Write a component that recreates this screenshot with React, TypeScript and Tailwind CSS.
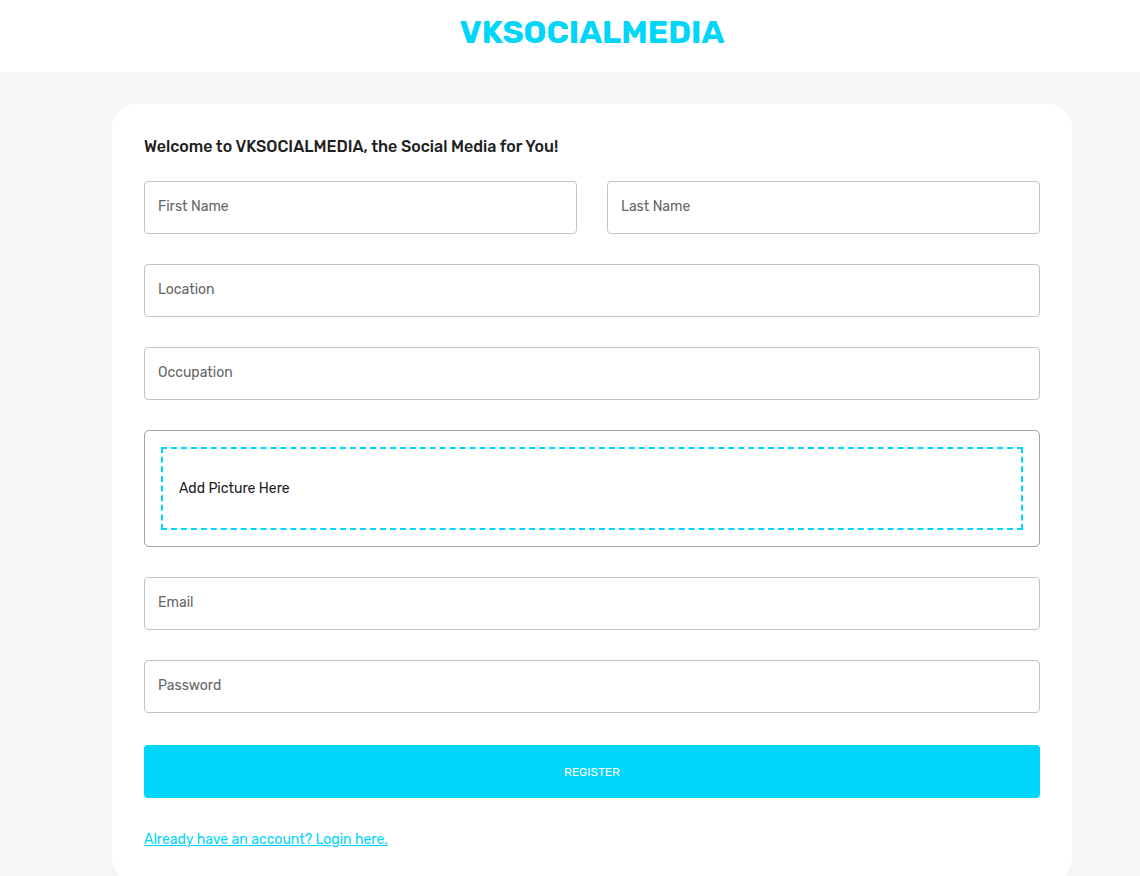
import { useId, useState, type FormEvent } from "react";

type FieldProps = {
  label: string;
  name: string;
  type?: string;
  autoComplete?: string;
  half?: boolean;
};

function Field({ label, name, type = "text", autoComplete, half = false }: FieldProps) {
  const id = useId();
  return (
    <div className={half ? "relative col-span-2 sm:col-span-1" : "relative col-span-2"}>
      <input
        id={id}
        name={name}
        type={type}
        autoComplete={autoComplete}
        placeholder=" "
        className="peer block h-[53px] w-full rounded border border-[#c4c4c4] bg-transparent px-[13px] text-sm text-[#212121] outline-none hover:border-[#212121] focus:border-[#00d5fa]"
      />
      <label
        htmlFor={id}
        className="pointer-events-none absolute -top-2 left-[10px] bg-white px-1 text-xs leading-4 text-[#666666] peer-placeholder-shown:top-4 peer-placeholder-shown:text-sm peer-placeholder-shown:leading-5 peer-focus:-top-2 peer-focus:text-xs peer-focus:leading-4 peer-focus:text-[#00d5fa]"
      >
        {label}
      </label>
    </div>
  );
}

function PicturePicker() {
  const id = useId();
  const [fileName, setFileName] = useState("");
  return (
    <div className="col-span-2 rounded-[5px] border border-[#a3a3a3] p-4">
      <label
        htmlFor={id}
        className="flex h-[83px] cursor-pointer items-center border-2 border-dashed border-[#00d5fa] px-4 text-sm text-[#212121] focus-within:bg-[#e6fbff]"
      >
        {fileName || "Add Picture Here"}
        <input
          id={id}
          name="picture"
          type="file"
          accept="image/png,image/jpeg"
          className="sr-only"
          onChange={(event) => setFileName(event.target.files?.[0]?.name ?? "")}
        />
      </label>
    </div>
  );
}

export default function App() {
  const handleSubmit = (event: FormEvent<HTMLFormElement>) => event.preventDefault();

  return (
    <div className="min-h-screen bg-[#f6f6f6] font-['Rubik','Inter',sans-serif] text-[#212121]">
      <header className="bg-white pt-4 pr-6 pb-6 pl-6 text-center md:pr-[68px] md:pl-28">
        <h1 className="text-[32px] leading-8 font-bold text-[#00d5fa]">VKSOCIALMEDIA</h1>
      </header>
      <main className="px-6 py-8 md:pr-[68px] md:pl-28">
        <section className="rounded-3xl bg-white p-8">
          <h2 className="mb-6 text-base leading-[21px] font-medium">
            Welcome to VKSOCIALMEDIA, the Social Media for You!
          </h2>
          <form onSubmit={handleSubmit}>
            <div className="grid grid-cols-2 gap-[30px]">
              <Field label="First Name" name="firstName" autoComplete="given-name" half />
              <Field label="Last Name" name="lastName" autoComplete="family-name" half />
              <Field label="Location" name="location" />
              <Field label="Occupation" name="occupation" />
              <PicturePicker />
              <Field label="Email" name="email" type="email" autoComplete="email" />
              <Field label="Password" name="password" type="password" autoComplete="new-password" />
            </div>
            <button
              type="submit"
              className="my-8 flex h-[53px] w-full cursor-pointer items-center justify-center rounded bg-[#00d5fa] text-xs font-normal text-white uppercase hover:text-[#006b7d]"
            >
              Register
            </button>
            <a
              href="#login"
              className="block w-fit text-sm leading-5 text-[#00d5fa] underline hover:text-[#99eefd]"
            >
              Already have an account? Login here.
            </a>
          </form>
        </section>
      </main>
    </div>
  );
}
